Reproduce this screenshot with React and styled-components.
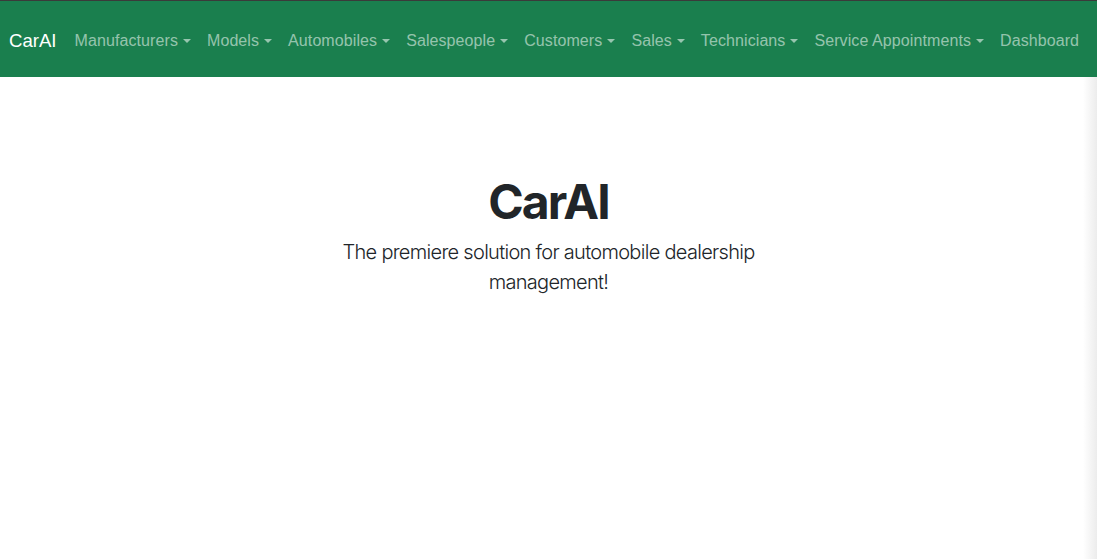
import React from 'react';
import styled, { createGlobalStyle } from 'styled-components';

const GlobalStyle = createGlobalStyle`
  html, body {
    margin: 0;
    padding: 0;
    background: #fff;
  }
  body {
    font-family: "Liberation Sans", Arial, sans-serif;
    color: #212529;
  }
`;

const Page = styled.div`
  min-height: 559px;
  display: flex;
  flex-direction: column;
`;

const Navbar = styled.nav`
  height: 77px;
  box-sizing: border-box;
  background: #1a7f4e;
  border-top: 1px solid #3a3a3a;
  display: flex;
  align-items: center;
  padding: 3px 9px 0;
  white-space: nowrap;
`;

const Brand = styled.a`
  color: #fff;
  font-size: 18.6px;
  text-decoration: none;
  margin-right: 10px;
`;

const NavList = styled.ul`
  display: flex;
  list-style: none;
  margin: 0;
  padding: 0;
`;

const NavLink = styled.a`
  display: flex;
  align-items: center;
  padding: 8px;
  font-size: 16px;
  letter-spacing: 0.09px;
  color: rgba(255, 255, 255, 0.55);
  text-decoration: none;
`;

const Caret = styled.span`
  display: inline-block;
  margin-left: 5px;
  border-top: 4.8px solid currentColor;
  border-left: 4.8px solid transparent;
  border-right: 4.8px solid transparent;
  margin-top: 1px;
`;

const Main = styled.main`
  position: relative;
  flex: 1;

  &::after {
    content: "";
    position: absolute;
    top: 0;
    right: 0;
    bottom: 0;
    width: 14px;
    background: linear-gradient(to right, rgba(235, 235, 235, 0), #ececec);
  }
`;

const Hero = styled.section`
  margin-top: 48px;
  padding: 48px 0;
  text-align: center;
  font-family: Inter, "Liberation Sans", sans-serif;
`;

const Title = styled.h1`
  margin: 0 0 6px;
  font-size: 48px;
  line-height: 1.2;
  font-weight: 700;
  letter-spacing: -2px;
  color: #212529;
`;

const Lead = styled.p`
  max-width: 456px;
  margin: 0 auto;
  font-size: 20px;
  line-height: 30px;
  font-weight: 300;
  letter-spacing: -0.7px;
  color: #212529;
`;

const links = [
  { label: 'Manufacturers', dropdown: true },
  { label: 'Models', dropdown: true },
  { label: 'Automobiles', dropdown: true },
  { label: 'Salespeople', dropdown: true },
  { label: 'Customers', dropdown: true },
  { label: 'Sales', dropdown: true },
  { label: 'Technicians', dropdown: true },
  { label: 'Service Appointments', dropdown: true },
  { label: 'Dashboard', dropdown: false },
];

export default function App() {
  return (
    <>
      <GlobalStyle />
      <Page>
        <Navbar>
          <Brand href="#">CarAI</Brand>
          <NavList>
            {links.map((l) => (
              <li key={l.label}>
                <NavLink href="#">
                  {l.label}
                  {l.dropdown && <Caret />}
                </NavLink>
              </li>
            ))}
          </NavList>
        </Navbar>
        <Main>
          <Hero>
            <Title>CarAI</Title>
            <Lead>The premiere solution for automobile dealership management!</Lead>
          </Hero>
        </Main>
      </Page>
    </>
  );
}
